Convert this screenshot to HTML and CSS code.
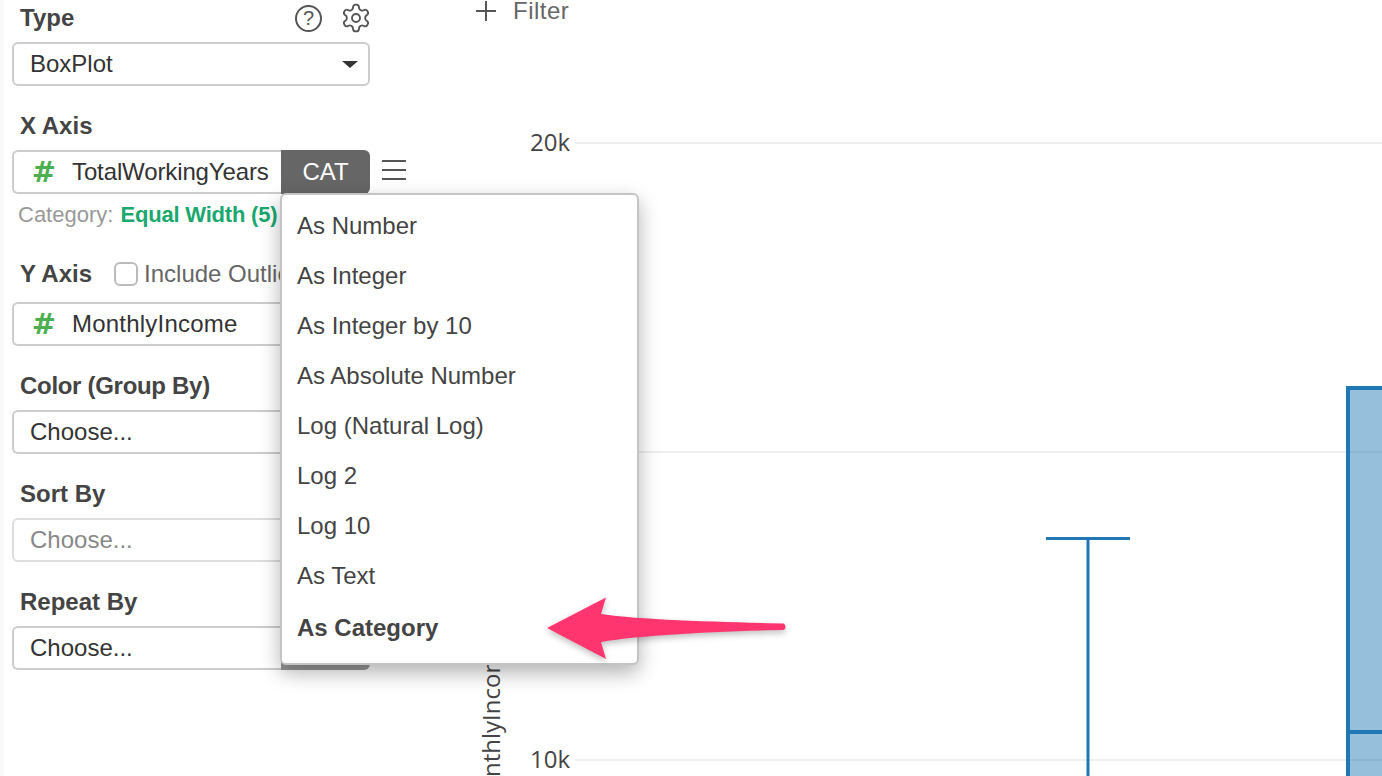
FILE: index.html
```html
<!DOCTYPE html>
<html lang="en">
<head>
<meta charset="utf-8">
<title>BoxPlot chart settings</title>
<link rel="stylesheet" href="styles.css">
</head>
<body>
<div class="page">
  <aside class="sidebar">
    <div class="label-row type-head">
      <span class="label">Type</span>
      <span class="head-icons">
        <span class="help">?</span>
        <svg class="gear" viewBox="0 0 24 24" aria-hidden="true"><path d="M12.22 2h-.44a2 2 0 0 0-2 2v.18a2 2 0 0 1-1 1.73l-.43.25a2 2 0 0 1-2 0l-.15-.08a2 2 0 0 0-2.73.73l-.22.38a2 2 0 0 0 .73 2.73l.15.1a2 2 0 0 1 1 1.72v.51a2 2 0 0 1-1 1.74l-.15.09a2 2 0 0 0-.73 2.73l.22.38a2 2 0 0 0 2.73.73l.15-.08a2 2 0 0 1 2 0l.43.25a2 2 0 0 1 1 1.73V20a2 2 0 0 0 2 2h.44a2 2 0 0 0 2-2v-.18a2 2 0 0 1 1-1.73l.43-.25a2 2 0 0 1 2 0l.15.08a2 2 0 0 0 2.73-.73l.22-.39a2 2 0 0 0-.73-2.73l-.15-.08a2 2 0 0 1-1-1.74v-.5a2 2 0 0 1 1-1.74l.15-.09a2 2 0 0 0 .73-2.73l-.22-.38a2 2 0 0 0-2.73-.73l-.15.08a2 2 0 0 1-2 0l-.43-.25a2 2 0 0 1-1-1.73V4a2 2 0 0 0-2-2z"/><circle cx="12" cy="12" r="3"/></svg>
      </span>
    </div>
    <div class="field select"><span class="field-text">BoxPlot</span><span class="caret"></span></div>

    <div class="label-row next"><span class="label">X Axis</span></div>
    <div class="control">
      <div class="field joined"><span class="hash">#</span><span class="field-name narrow">TotalWorkingYears</span></div>
      <div class="cat">CAT</div>
      <div class="burger"><i></i><i></i><i></i></div>
    </div>
    <div class="hint">Category: <b>Equal Width (5)</b></div>

    <div class="label-row y-head">
      <span class="label">Y Axis</span>
      <span class="check"></span>
      <span class="check-label">Include Outlier</span>
    </div>
    <div class="control">
      <div class="field joined"><span class="hash">#</span><span class="field-name wide">MonthlyIncome</span></div>
      <div class="cat"></div>
    </div>

    <div class="label-row next"><span class="label tight">Color (Group By)</span></div>
    <div class="control">
      <div class="field joined"><span class="field-text">Choose...</span></div>
      <div class="cat"></div>
    </div>

    <div class="label-row next"><span class="label">Sort By</span></div>
    <div class="control">
      <div class="field joined muted"><span class="field-text">Choose...</span></div>
      <div class="cat"></div>
    </div>

    <div class="label-row next"><span class="label">Repeat By</span></div>
    <div class="control">
      <div class="field joined"><span class="field-text">Choose...</span></div>
      <div class="cat dim"></div>
    </div>
  </aside>

  <main class="main">
    <div class="filter"><span class="plus"></span><span class="filter-text">Filter</span></div>
    <svg class="chart" viewBox="470 22 912 754" aria-label="Box plot">
      <line class="grid" x1="575" y1="143" x2="1382" y2="143"/>
      <line class="grid" x1="575" y1="452" x2="1382" y2="452"/>
      <line class="grid" x1="575" y1="760" x2="1382" y2="760"/>
      <text class="tick" x="570" y="151">20k</text>
      <text class="tick" x="570" y="768">10k</text>
      <text class="axis-title" transform="translate(500 776) rotate(-90)" x="-37" y="0">MonthlyIncome</text>
      <line class="whisker" x1="1046" y1="538.5" x2="1130" y2="538.5"/>
      <line class="whisker" x1="1088" y1="538" x2="1088" y2="776"/>
      <rect class="box" x="1348" y="388" width="60" height="400"/>
      <line class="median" x1="1348" y1="732" x2="1382" y2="732"/>
    </svg>
  </main>

  <ul class="menu">
    <li>As Number</li>
    <li>As Integer</li>
    <li>As Integer by 10</li>
    <li>As Absolute Number</li>
    <li>Log (Natural Log)</li>
    <li>Log 2</li>
    <li>Log 10</li>
    <li>As Text</li>
    <li class="active">As Category</li>
  </ul>

  <svg class="arrow" viewBox="0 0 250 70" aria-hidden="true">
    <path d="M7 33 L66 2.500 L61 19 C100 25 180 27 244 28.500 Q247 32 244 35 C180 36 100 40 61 47 L66 64 Z"/>
  </svg>
</div>
</body>
</html>
```
FILE: styles.css
```css
* { box-sizing: border-box; }
html, body { margin: 0; height: 100%; }
body {
  background: #fff;
  color: #333;
  font-family: "Liberation Sans", Arial, sans-serif;
  font-size: 24px;
  overflow: hidden;
}
.page {
  position: relative;
  display: flex;
  width: 1382px;
  height: 776px;
  overflow: hidden;
  border-left: 4px solid #fafafa;
}
.sidebar {
  display: flex;
  flex-direction: column;
  width: 466px;
  flex: none;
  padding-left: 8px;
}
.label-row {
  display: flex;
  align-items: center;
  width: 358px;
  padding-left: 8px;
}
.label { font-weight: 700; color: #444; }
.tight { letter-spacing: -0.3px; }
.type-head { justify-content: space-between; height: 42px; padding-bottom: 6px; }
.head-icons { display: flex; align-items: center; gap: 18px; color: #555; margin-right: -2px; }
.help {
  display: flex;
  align-items: center;
  justify-content: center;
  width: 27px;
  height: 27px;
  border: 2px solid #555;
  border-radius: 50%;
  font-size: 20px;
}
.gear { width: 32px; height: 32px; fill: none; stroke: #555; stroke-width: 1.4; }
.field {
  display: flex;
  align-items: center;
  height: 44px;
  background: #fff;
  border: 2px solid #ccc;
  border-radius: 6px;
}
.select { width: 358px; justify-content: space-between; padding: 0 10px 0 16px; }
.caret {
  border-left: 8px solid transparent;
  border-right: 8px solid transparent;
  border-top: 7px solid #333;
}
.control { display: flex; align-items: center; width: 400px; }
.joined {
  width: 269px;
  border-right: 0;
  border-radius: 6px 0 0 6px;
  padding-left: 16px;
}
.muted { color: #888; border-color: #ddd; }
.hash {
  width: 30px;
  margin-left: -1px;
  margin-right: 13px;
  color: #4caf50;
  font-family: "DejaVu Sans", sans-serif;
  font-weight: 700;
  font-size: 29px;
  line-height: 1;
  text-align: center;
}
.field-name { color: #333; }
.narrow { letter-spacing: -0.12px; }
.wide { letter-spacing: 0.22px; }
.cat {
  width: 89px;
  height: 44px;
  display: flex;
  align-items: center;
  justify-content: center;
  background: #666;
  color: #fff;
  border-radius: 0 6px 6px 0;
}
.dim { background: #999; }
.burger {
  display: flex;
  flex-direction: column;
  gap: 7px;
  margin: -5px 0 0 12px;
}
.burger i { display: block; width: 24px; height: 2px; background: #555; }
.hint { height: 42px; padding-top: 8px; padding-left: 6px; font-size: 22px; color: #999; }
.hint b { color: #1aa86f; margin-left: 1px; letter-spacing: -0.2px; }
.y-head { height: 66px; padding-top: 10px; gap: 22px; }
.check {
  width: 24px;
  height: 24px;
  border: 2px solid #bbb;
  border-radius: 6px;
  flex: none;
}
.check-label { margin-left: -16px; color: #666; white-space: nowrap; }
.next { height: 64px; padding-top: 16px; }

.main { flex: 1; display: flex; flex-direction: column; min-width: 0; }
.filter {
  display: flex;
  align-items: center;
  gap: 17px;
  height: 22px;
  padding-left: 6px;
  color: #666;
}
.filter-text { letter-spacing: .5px; }
.plus {
  width: 20px;
  height: 20px;
  background:
    linear-gradient(#555, #555) center / 20px 2px no-repeat,
    linear-gradient(#555, #555) center / 2px 20px no-repeat;
}
.chart { width: 912px; height: 754px; display: block; }
.grid { stroke: #eee; stroke-width: 2; }
.tick { fill: #444; font-family: "Open Sans", sans-serif; font-size: 24px; text-anchor: end; }
.axis-title { fill: #444; font-family: "Open Sans", sans-serif; font-size: 24px; }
.whisker { stroke: #1f77b4; stroke-width: 3; }
.box { fill: rgba(31, 119, 180, .47); stroke: #1f77b4; stroke-width: 4; }
.median { stroke: #1f77b4; stroke-width: 4; }

.menu {
  position: absolute;
  left: 276px;
  top: 193px;
  width: 359px;
  height: 472px;
  margin: 0;
  padding: 6px 0 0;
  list-style: none;
  background: #fff;
  border: 2px solid #c4c4c4;
  border-radius: 6px;
  box-shadow: 0 8px 20px rgba(0, 0, 0, .3);
}
.menu li { height: 50px; line-height: 50px; padding-left: 15px; color: #444; }
.menu .active { font-weight: 700; margin-top: 2px; }
.arrow {
  position: absolute;
  left: 536px;
  top: 595px;
  width: 250px;
  height: 70px;
  fill: #ff3570;
  filter: drop-shadow(0 3px 3px rgba(0, 0, 0, .25));
}
```
